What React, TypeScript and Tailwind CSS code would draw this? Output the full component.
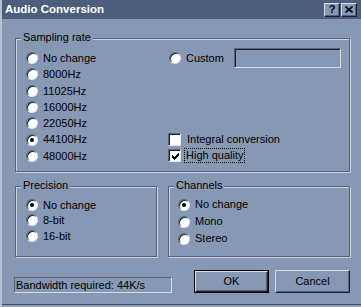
import type { ReactNode } from 'react';

// Win-classic dialog, slate-blue theme
const font = { fontFamily: '"Liberation Sans", Arial, sans-serif' };

function Radio({ checked = false }: { checked?: boolean }) {
  return (
    <span className="flex h-[12px] w-[12px] shrink-0 items-center justify-center rounded-full border border-t-[#56647b] border-l-[#56647b] border-r-[#e4e9f0] border-b-[#e4e9f0] bg-white shadow-[inset_1px_1px_0_#1b2130]">
      {checked && <span className="h-[4px] w-[4px] rounded-full bg-black" />}
    </span>
  );
}

function Check({ checked = false }: { checked?: boolean }) {
  const cols = [2, 3, 4, 3, 2, 1, 0];
  return (
    <span className="-ml-px flex h-[13px] w-[13px] shrink-0 items-center justify-center border border-t-[#56647b] border-l-[#56647b] border-r-[#e4e9f0] border-b-[#e4e9f0] bg-white shadow-[inset_1px_1px_0_#1b2130]">
      {checked && (
        <svg width="7" height="7" viewBox="0 0 7 7" shapeRendering="crispEdges" className="ml-px mt-px">
          {cols.map((y, x) => (
            <rect key={x} x={x} y={y} width="1" height="3" fill="#000" />
          ))}
        </svg>
      )}
    </span>
  );
}

function RadioRow({ label, checked, h }: { label: string; checked?: boolean; h: string }) {
  return (
    <div className={`flex items-center gap-[5px] ${h}`}>
      <Radio checked={checked} />
      <span>{label}</span>
    </div>
  );
}

function Group({ label, className, children }: { label: string; className: string; children: ReactNode }) {
  return (
    <div className={`relative border border-[#56647b] shadow-[1px_1px_0_#c9d2df,inset_1px_1px_0_#c9d2df] ${className}`}>
      <span className="absolute -top-[8px] left-[5px] bg-[#8698b3] px-[2px] leading-[13px]">{label}</span>
      {children}
    </div>
  );
}

function Button({ children, isDefault = false }: { children: ReactNode; isDefault?: boolean }) {
  return (
    <div className={`h-[23px] w-[75px] ${isDefault ? 'border border-black' : ''}`}>
      <div className="flex h-full w-full items-center justify-center border border-t-[#d4dce7] border-l-[#d4dce7] border-r-[#1b2130] border-b-[#1b2130] shadow-[inset_-1px_-1px_0_#56647b]">
        {children}
      </div>
    </div>
  );
}

export default function App() {
  return (
    <div
      className="flex h-[307px] w-[361px] flex-col border-l-2 border-l-[#b4c1d3] bg-[#8698b3] text-[11px] text-black"
      style={font}
    >
      {/* Title bar */}
      <div className="flex h-[19px] shrink-0 items-center bg-[#4d5d7c] pr-[4px]">
        <span className="ml-[3px] mt-[1px] text-[11.5px] font-bold text-white">Audio Conversion</span>
        <div className="ml-auto flex gap-[1px]">
          <div className="flex h-[14px] w-[16px] items-center justify-center border border-t-[#d4dce7] border-l-[#d4dce7] border-r-[#1b2130] border-b-[#1b2130] bg-[#8698b3] text-[11px] font-bold leading-none shadow-[inset_-1px_-1px_0_#56647b]">
            ?
          </div>
          <div className="flex h-[14px] w-[16px] items-center justify-center border border-t-[#d4dce7] border-l-[#d4dce7] border-r-[#1b2130] border-b-[#1b2130] bg-[#8698b3] shadow-[inset_-1px_-1px_0_#56647b]">
            <svg width="8" height="7" viewBox="0 0 8 7">
              <path d="M0.5 0.5 L7.5 6.5 M7.5 0.5 L0.5 6.5" stroke="#000" strokeWidth="1.6" />
            </svg>
          </div>
        </div>
      </div>

      {/* Client area */}
      <div className="flex flex-col pl-[13px]">
        <Group label="Sampling rate" className="mt-[19px] flex w-[335px] pb-[7px] pl-[10px] pr-[8px] pt-[11px]">
          <div className="w-[143px]">
            <RadioRow h="h-[16.3px]" label="No change" />
            <RadioRow h="h-[16.3px]" label="8000Hz" />
            <RadioRow h="h-[16.3px]" label="11025Hz" />
            <RadioRow h="h-[16.3px]" label="16000Hz" />
            <RadioRow h="h-[16.3px]" label="22050Hz" />
            <RadioRow h="h-[16.3px]" label="44100Hz" checked />
            <RadioRow h="h-[16.3px]" label="48000Hz" />
          </div>
          <div className="flex flex-1 flex-col">
            <div className="flex h-[16.3px] items-center gap-[5px]">
              <Radio />
              <span>Custom</span>
              <div className="-my-[2px] ml-auto h-[20px] w-[107px] border border-t-[#56647b] border-l-[#56647b] border-r-[#d4dce7] border-b-[#d4dce7] shadow-[inset_1px_1px_0_#1b2130]" />
            </div>
            <div className="flex-1" />
            <div className="flex h-[16.3px] items-center gap-[6px]">
              <Check />
              <span>Integral conversion</span>
            </div>
            <div className="flex h-[16.3px] items-center gap-[4px]">
              <Check checked />
              <span className="px-[1px] leading-[13px] outline-1 outline-dotted outline-black">High quality</span>
            </div>
          </div>
        </Group>

        <div className="mt-[14px] flex">
          <Group label="Precision" className="h-[71px] w-[142px] pl-[10px] pt-[10px]">
            <RadioRow h="h-[15.5px]" label="No change" checked />
            <RadioRow h="h-[15.5px]" label="8-bit" />
            <RadioRow h="h-[15.5px]" label="16-bit" />
          </Group>
          <Group label="Channels" className="ml-[11px] h-[71px] w-[182px] pl-[9px] pt-[9px]">
            <RadioRow h="h-[17px]" label="No change" checked />
            <RadioRow h="h-[17px]" label="Mono" />
            <RadioRow h="h-[17px]" label="Stereo" />
          </Group>
        </div>

        <div className="mt-[13px] flex items-start">
          <div className="-ml-px mt-[7px] flex h-[16px] w-[158px] items-center border border-t-[#56647b] border-l-[#56647b] border-r-[#d4dce7] border-b-[#d4dce7] pl-[1px]">
            Bandwidth required: 44K/s
          </div>
          <div className="ml-[22px]">
            <Button isDefault>OK</Button>
          </div>
          <div className="ml-[6px]">
            <Button>Cancel</Button>
          </div>
        </div>
      </div>

      {/* Bottom frame edge */}
      <div className="mt-auto h-[3px] border-t border-[#3c475b] bg-[#93a4bd]" />
    </div>
  );
}
